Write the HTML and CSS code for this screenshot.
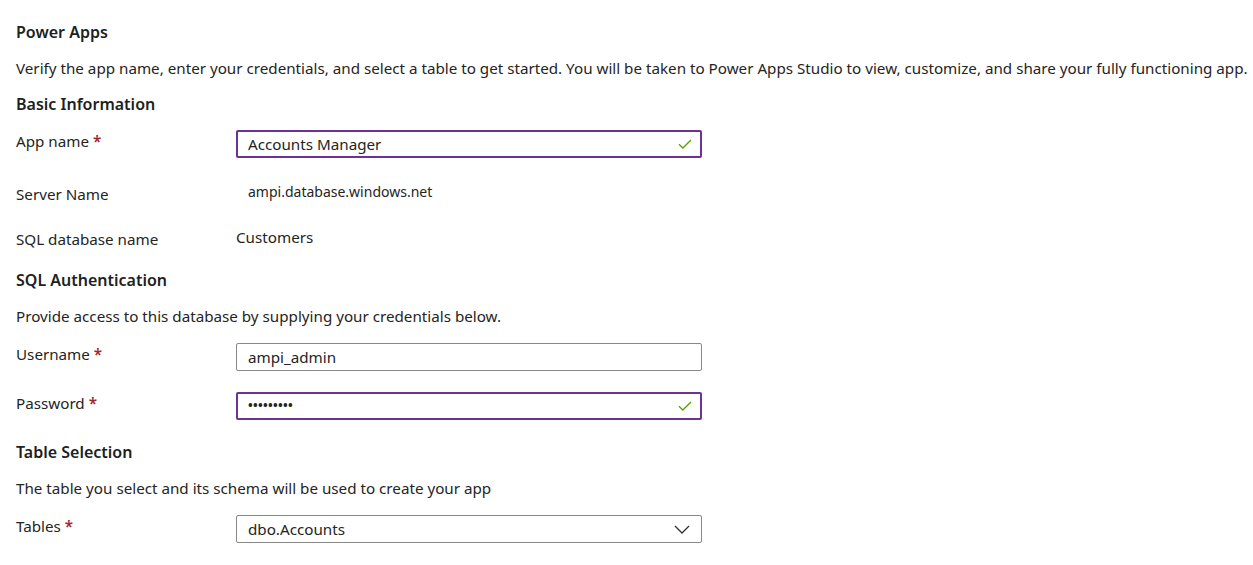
FILE: index.html
```html
<!DOCTYPE html>
<html lang="en">
<head>
<meta charset="utf-8">
<title>Power Apps</title>
<link rel="stylesheet" href="styles.css">
</head>
<body>
<main class="page">
  <h1 class="title">Power Apps</h1>
  <p class="desc">Verify the app name, enter your credentials, and select a table to get started. You will be taken to Power Apps Studio to view, customize, and share your fully functioning app.</p>

  <h2 class="section">Basic Information</h2>
  <div class="row row-first">
    <label class="label">App name <span class="req">*</span></label>
    <div class="field field-valid">
      <span class="field-text">Accounts Manager</span>
      <svg class="icon" width="14" height="10" viewBox="0 0 14 10"><path d="M1 5.2 L4.8 9 L13 1" fill="none" stroke="#57a300" stroke-width="1.3"/></svg>
    </div>
  </div>
  <div class="row row-static row-server">
    <span class="label">Server Name</span>
    <span class="value value-indent">ampi.database.windows.net</span>
  </div>
  <div class="row row-static row-db">
    <span class="label">SQL database name</span>
    <span class="value">Customers</span>
  </div>

  <h2 class="section section-gap">SQL Authentication</h2>
  <p class="desc">Provide access to this database by supplying your credentials below.</p>
  <div class="row row-first">
    <label class="label">Username <span class="req">*</span></label>
    <div class="field">
      <span class="field-text">ampi_admin</span>
    </div>
  </div>
  <div class="row row-next">
    <label class="label">Password <span class="req">*</span></label>
    <div class="field field-valid">
      <span class="field-text dots">•••••••••</span>
      <svg class="icon" width="14" height="10" viewBox="0 0 14 10"><path d="M1 5.2 L4.8 9 L13 1" fill="none" stroke="#57a300" stroke-width="1.3"/></svg>
    </div>
  </div>

  <h2 class="section section-gap2">Table Selection</h2>
  <p class="desc">The table you select and its schema will be used to create your app</p>
  <div class="row row-first">
    <label class="label">Tables <span class="req">*</span></label>
    <div class="field">
      <span class="field-text">dbo.Accounts</span>
      <svg class="icon chevron" width="16" height="9" viewBox="0 0 16 9"><path d="M1 1 L8 8 L15 1" fill="none" stroke="#323130" stroke-width="1.3"/></svg>
    </div>
  </div>
</main>
</body>
</html>
```

FILE: styles.css
```css
* { box-sizing: border-box; }

html, body {
  margin: 0;
  padding: 0;
  background: #ffffff;
}

body {
  font-family: "Noto Sans", "Open Sans", "Liberation Sans", sans-serif;
  font-size: 15.2px;
  color: #252423;
}

.page {
  padding: 22px 0 0 16px;
}

.title,
.section {
  margin: 0;
  font-size: 16px;
  font-weight: 600;
  line-height: 20px;
  color: #201f1e;
}

.desc {
  margin: 16px 0 0 0;
  padding-bottom: 1px;
  line-height: 20px;
  white-space: nowrap;
}

.section {
  margin-top: 15px;
}

.section-gap { margin-top: 21px; }
.section-gap2 { margin-top: 22px; }

.row {
  display: grid;
  grid-template-columns: 220px 466px;
  align-items: start;
}

.row-first { margin-top: 16px; }
.row-next { margin-top: 21px; }

.label {
  padding-top: 1px;
  line-height: 20px;
}

.req {
  color: #a4262c;
  font-weight: 600;
}

.field {
  height: 28px;
  border: 1px solid #8a8886;
  border-radius: 2px;
  display: flex;
  align-items: center;
  justify-content: space-between;
  padding: 0 8px 0 11px;
  background: #fff;
}

.field-valid {
  border: 2px solid #6e3196;
  padding-left: 10px;
  padding-right: 7px;
}

.field-text {
  line-height: 20px;
}

.dots {
  font-size: 12.5px;
  letter-spacing: 0.3px;
  font-weight: 700;
}

.icon { display: block; flex: none; margin-right: 1px; }
.chevron { margin-right: 3px; }

.row-static .value {
  line-height: 20px;
}

.row-server { margin-top: 24px; }
.row-server .label { padding-top: 2px; }
.row-db { margin-top: 23px; }
.row-db .label { padding-top: 2px; }

.value-indent {
  padding-left: 12px;
  font-size: 14px;
}
```
